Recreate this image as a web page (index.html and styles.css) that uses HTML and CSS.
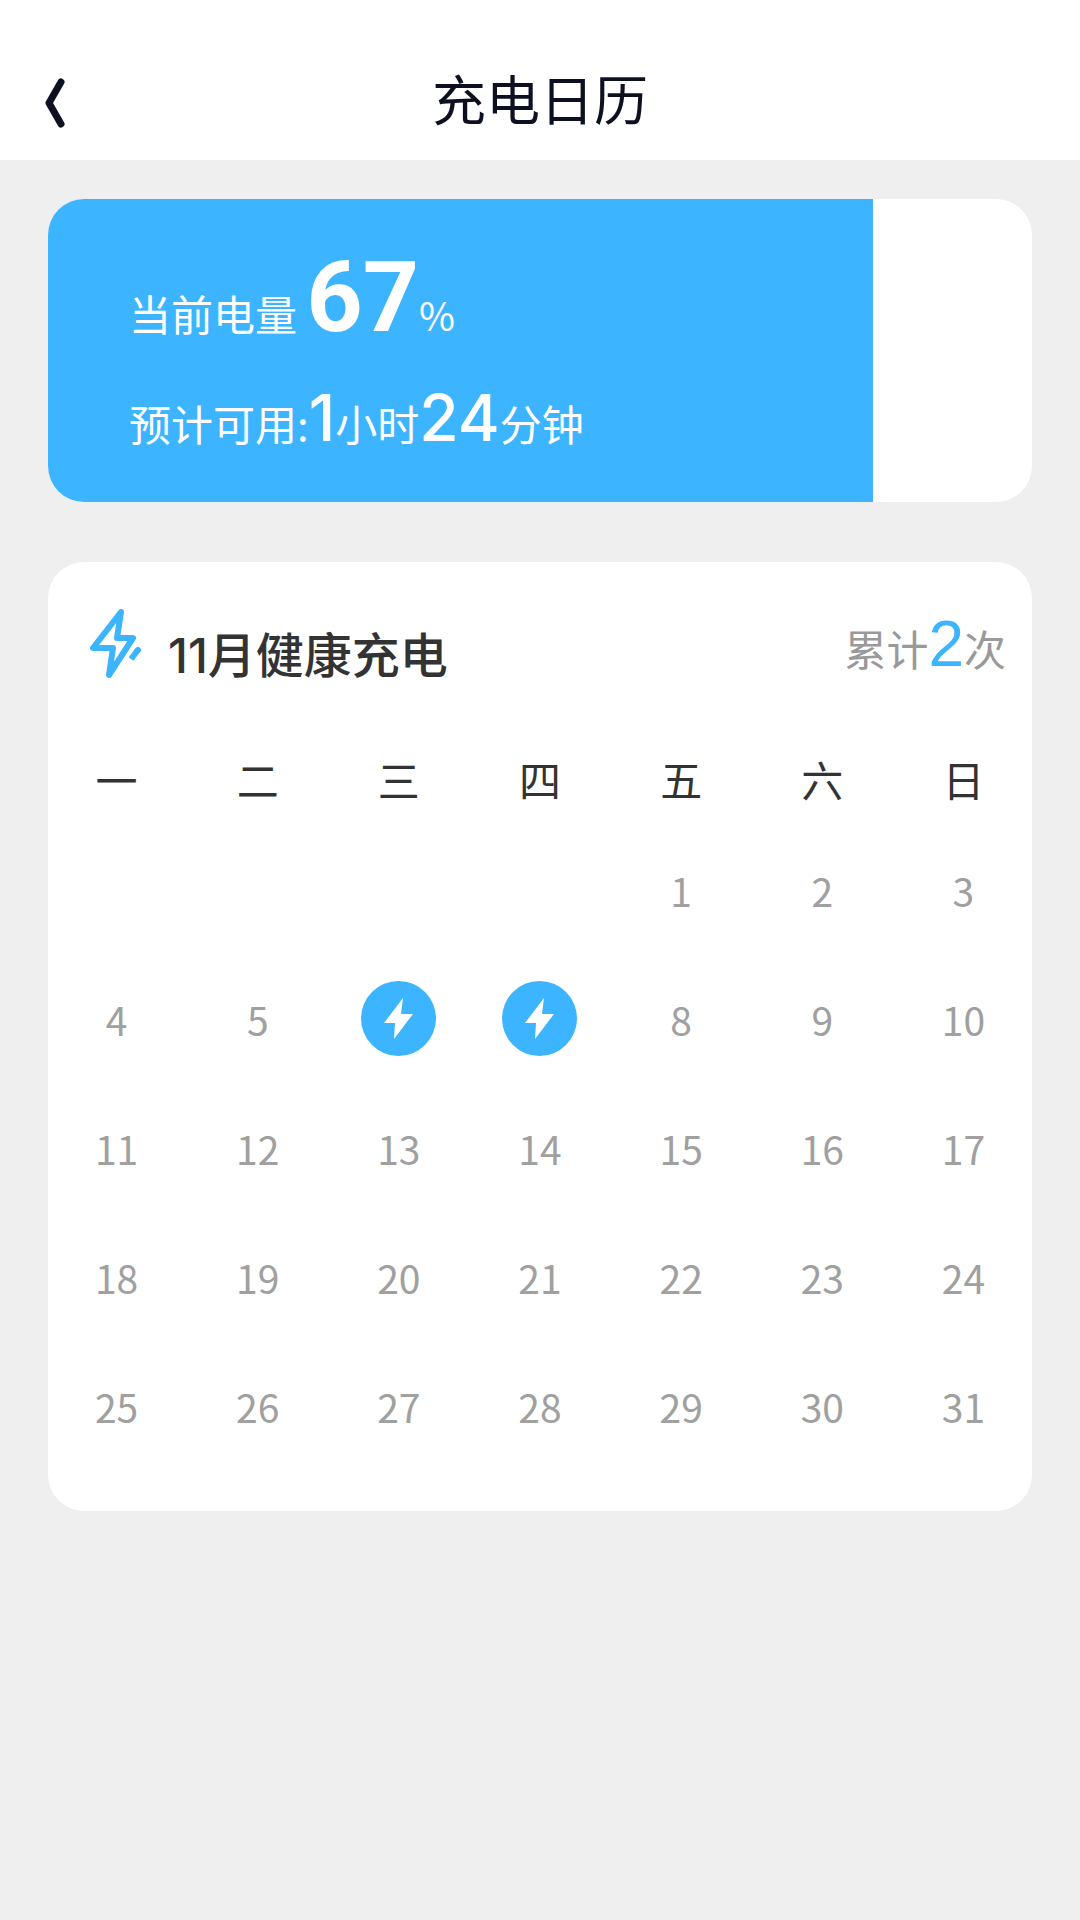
FILE: index.html
```html
<!DOCTYPE html>
<html lang="zh-CN">
<head>
<meta charset="utf-8">
<meta name="viewport" content="width=device-width, initial-scale=1">
<title>充电日历</title>
<link rel="stylesheet" href="styles.css">
</head>
<body>
<svg class="defs" aria-hidden="true">
  <symbol id="bolt" viewBox="0 0 29 41"><path d="M19 0 0 25H11L10 41 29 16H17Z" fill="currentColor"/></symbol>
</svg>
<header class="topbar">
  <button class="back" type="button" aria-label="返回">
    <svg width="20" height="50" viewBox="0 0 20 50"><path d="M16 4 4 25 16 46" fill="none" stroke="currentColor" stroke-width="7" stroke-linecap="round" stroke-linejoin="round"/></svg>
  </button>
  <h1 class="title">充电日历</h1>
</header>
<main class="content">
  <section class="card battery">
    <div class="level">
      <p class="line">当前电量 <strong class="percent">67</strong><span class="unit">%</span></p>
      <p class="line">预计可用:<b class="num">1</b>小时<b class="num">24</b>分钟</p>
    </div>
  </section>
  <section class="card calendar">
    <div class="head">
      <svg class="logo" width="52" height="70" viewBox="0 0 52 70" fill="none" stroke="#3cb4ff" stroke-width="6" stroke-linejoin="round">
        <path d="M31 4 3 40H23L19 67 43 30H27Z"/>
        <path d="M41 51 48 42"/><path d="M47 43 48 42" stroke-linecap="round"/>
      </svg>
      <h2 class="month">11月健康充电</h2>
      <p class="total">累计<b class="count">2</b>次</p>
    </div>
    <table class="days">
      <thead><tr><th>一</th><th>二</th><th>三</th><th>四</th><th>五</th><th>六</th><th>日</th></tr></thead>
      <tbody>
        <tr><td></td><td></td><td></td><td></td><td>1</td><td>2</td><td>3</td></tr>
        <tr><td>4</td><td>5</td><td><span class="mark" role="img" aria-label="已充电"><svg width="29" height="41"><use href="#bolt"/></svg></span></td><td><span class="mark" role="img" aria-label="已充电"><svg width="29" height="41"><use href="#bolt"/></svg></span></td><td>8</td><td>9</td><td>10</td></tr>
        <tr><td>11</td><td>12</td><td>13</td><td>14</td><td>15</td><td>16</td><td>17</td></tr>
        <tr><td>18</td><td>19</td><td>20</td><td>21</td><td>22</td><td>23</td><td>24</td></tr>
        <tr><td>25</td><td>26</td><td>27</td><td>28</td><td>29</td><td>30</td><td>31</td></tr>
      </tbody>
    </table>
  </section>
</main>
</body>
</html>
```
FILE: styles.css
```css
* { box-sizing: border-box; }
body {
  margin: 0;
  min-height: 100vh;
  background: #efefef;
  color: #333;
  font-family: "Noto Sans CJK SC", sans-serif;
  font-size: 42px;
}
h1, h2, p { margin: 0; }
.defs { display: none; }

.topbar {
  display: grid;
  grid-template-columns: 80px 1fr 80px;
  align-items: center;
  height: 160px;
  padding-top: 36px;
  background: #fff;
  color: #0c1020;
}
.back {
  display: flex;
  justify-content: flex-end;
  padding: 10px 15px 0 0;
  border: 0;
  background: none;
  color: inherit;
}
.title {
  font-size: 54px;
  font-weight: 400;
  line-height: 80px;
  text-align: center;
}

.content {
  display: flex;
  flex-direction: column;
  gap: 60px;
  padding: 39px 48px;
}
.card {
  overflow: hidden;
  border-radius: 36px;
  background: #fff;
}

.level {
  width: 83.8%;
  padding: 59px 0 24px 81px;
  background: #3cb4ff;
  color: #fff;
}
.line {
  line-height: 110px;
  white-space: nowrap;
}
.percent {
  font-family: Roboto, sans-serif;
  font-size: 98px;
  font-weight: 700;
  line-height: 0;
}
.unit {
  font-size: 39px;
  line-height: 0;
}
.num, .count { line-height: 0; }
.num {
  font-family: Inter, sans-serif;
  font-size: 64px;
  font-weight: 500;
}

.calendar { padding-bottom: 39px; }
.head {
  display: flex;
  align-items: flex-start;
  height: 173px;
  padding: 46px 26px 0 42px;
}
.month {
  flex: 1;
  padding: 12px 0 0 26px;
  font-family: Inter, "Noto Sans CJK SC", sans-serif;
  font-size: 48px;
  font-weight: 500;
  line-height: 72px;
}
.total {
  padding-top: 4px;
  color: #999;
  line-height: 72px;
}
.count {
  color: #3cb4ff;
  font-family: "Liberation Sans", sans-serif;
  font-size: 64px;
  font-weight: 400;
}
.days {
  width: calc(100% + 4px);
  margin: 0 -2px;
  border-collapse: collapse;
  table-layout: fixed;
}
.days th, .days td {
  padding: 0 0 4px;
  text-align: center;
  vertical-align: middle;
  line-height: 60px;
}
.days th { height: 92px; font-weight: 400; }
.days td {
  height: 129px;
  color: #a0a0a0;
  font-size: 39px;
}
.mark {
  display: flex;
  align-items: center;
  justify-content: center;
  width: 75px;
  height: 75px;
  margin: 0 auto;
  border-radius: 50%;
  background: #3cb4ff;
  color: #fff;
}
```
